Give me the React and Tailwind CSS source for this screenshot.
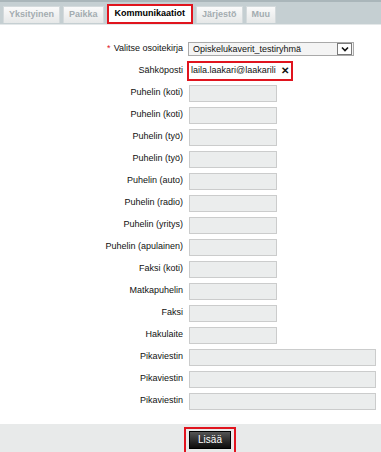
import { useState } from "react";

const rows = [
  { label: "Puhelin (koti)" },
  { label: "Puhelin (koti)" },
  { label: "Puhelin (työ)" },
  { label: "Puhelin (työ)" },
  { label: "Puhelin (auto)" },
  { label: "Puhelin (radio)" },
  { label: "Puhelin (yritys)" },
  { label: "Puhelin (apulainen)" },
  { label: "Faksi (koti)" },
  { label: "Matkapuhelin" },
  { label: "Faksi" },
  { label: "Hakulaite" },
  { label: "Pikaviestin", wide: true },
  { label: "Pikaviestin", wide: true },
  { label: "Pikaviestin", wide: true },
];

const tabs = ["Yksityinen", "Paikka", "Kommunikaatiot", "Järjestö", "Muu"];

function Tab({ name, active }) {
  if (active) {
    return (
      <div className="border-2 border-[#e0141e] h-[20px] flex items-stretch">
        <div className="bg-white px-[6px] flex items-center text-black font-bold">{name}</div>
      </div>
    );
  }
  return (
    <div className="h-[17px] mb-[1px] px-[5px] flex items-center font-bold text-[#a3acb0] bg-gradient-to-b from-[#fafafa] to-[#e6e8e8] border border-b-0 border-[#d4dadc]">
      {name}
    </div>
  );
}

function Row({ label, children, required }) {
  return (
    <div className="h-[22px] flex items-center">
      <div className="w-[189px] pr-[6px] text-right text-[#111]">
        {required && <span className="text-[#e0141e] mr-[3px]">*</span>}
        {label}
      </div>
      {children}
    </div>
  );
}

export default function App() {
  const [email, setEmail] = useState("laila.laakari@laakarili");

  return (
    <div className="w-[381px] h-[452px] bg-white text-[9px] font-['Liberation_Sans',Arial,sans-serif] flex flex-col overflow-hidden">
      <div className="h-[25px] bg-[#c5cfd2] border-t-2 border-[#aab6ba] border-b border-b-[#e4e8e9] flex items-end pl-[3px] gap-[3px]">
        {tabs.map((t) => (
          <Tab key={t} name={t} active={t === "Kommunikaatiot"} />
        ))}
      </div>

      <div className="pt-[13px] flex flex-col">
        <Row label="Valitse osoitekirja" required>
          <div className="-ml-[1px] w-[166px] h-[14px] border border-[#a9a9a9] bg-[#f4f4f4] flex items-center justify-between">
            <span className="pl-[4px] text-[#111] leading-none">Opiskelukaverit_testiryhmä</span>
            <span className="w-[15px] h-[12px] mr-[1px] border border-[#7a7a7a] bg-white flex items-center justify-center">
              <svg width="8" height="6" viewBox="0 0 8 6">
                <path d="M1 1.5 L4 4.5 L7 1.5" fill="none" stroke="#111" strokeWidth="1.6" />
              </svg>
            </span>
          </div>
        </Row>
        <Row label="Sähköposti">
          <div className="-ml-[2px] h-[20px] border-2 border-[#e0141e] flex items-center pl-[2px] pr-[2px] bg-white">
            <input
              value={email}
              onChange={(e) => setEmail(e.target.value)}
              className="w-[88px] outline-none text-[#111] text-[9px] bg-transparent"
            />
            <span className="ml-[2px] text-[#111] font-bold text-[10px] leading-none">✕</span>
          </div>
        </Row>
        {rows.map((r, i) => (
          <Row key={i} label={r.label}>
            <input
              className={`${r.wide ? "w-[187px]" : "w-[88px]"} h-[17px] bg-[#ebeded] border border-[#cbcccc] outline-none`}
            />
          </Row>
        ))}
      </div>

      <div className="mt-auto h-[28px] bg-[#e8eaea] flex items-start pt-[3px] pl-[184px]">
        <div className="border-2 border-[#e0141e] px-[3px] pt-[2px] pb-[4px]">
          <button className="h-[18px] w-[42px] bg-gradient-to-b from-[#555] to-[#0d0d0d] border border-[#000] text-white text-[10px] leading-none">
            Lisää
          </button>
        </div>
      </div>
    </div>
  );
}
